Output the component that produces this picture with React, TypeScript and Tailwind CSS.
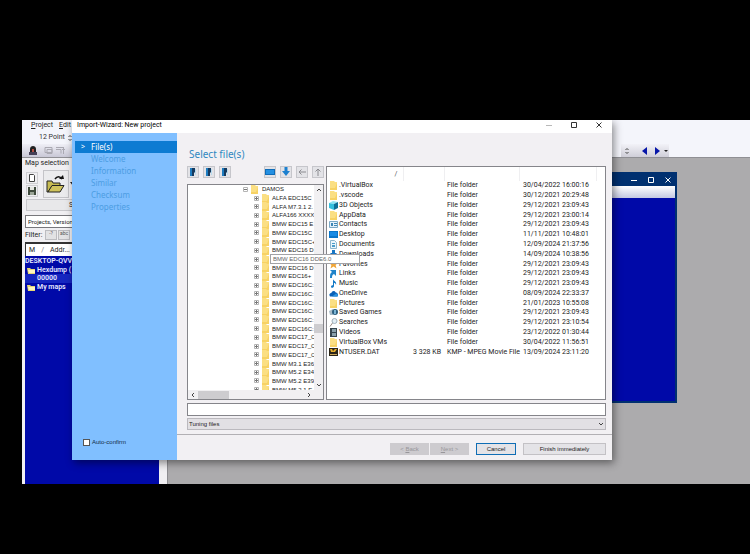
import { useState } from 'react';
import type { ReactNode } from 'react';
import { clsx } from 'clsx';

const STEPS = ['File(s)', 'Welcome', 'Information', 'Similar', 'Checksum', 'Properties'];

// the empty entry is the hovered row, its full name is shown in the tooltip
const TREE = [
  'ALFA EDC15C', 'ALFA M7.3.1 2.', 'ALFA166 XXXX', 'BMW EDC15 E', 'BMW EDC15C', 'BMW EDC15C+',
  'BMW EDC16 D', '', 'BMW EDC16 D', 'BMW EDC16+', 'BMW EDC16C:', 'BMW EDC16C:',
  'BMW EDC16C:', 'BMW EDC16C:', 'BMW EDC16C:', 'BMW EDC16C:', 'BMW EDC17_C', 'BMW EDC17_C',
  'BMW EDC17_C', 'BMW M3.1 E36', 'BMW M5.2 E34', 'BMW M5.2 E39', 'BMW M5.2.1 E',
];

interface FileRow {
  name: string;
  icon: string;
  date: string;
  size?: string;
  type?: string;
}

const FILES: FileRow[] = [
  { name: '.VirtualBox', icon: 'folder', date: '30/04/2022 16:00:16' },
  { name: '.vscode', icon: 'folder', date: '30/12/2021 20:29:48' },
  { name: '3D Objects', icon: 'cube', date: '29/12/2021 23:09:43' },
  { name: 'AppData', icon: 'folder', date: '29/12/2021 23:00:14' },
  { name: 'Contacts', icon: 'contacts', date: '29/12/2021 23:09:43' },
  { name: 'Desktop', icon: 'desktop', date: '11/11/2021 10:48:01' },
  { name: 'Documents', icon: 'document', date: '12/09/2024 21:37:56' },
  { name: 'Downloads', icon: 'download', date: '14/09/2024 10:38:56' },
  { name: 'Favorites', icon: 'star', date: '29/12/2021 23:09:43' },
  { name: 'Links', icon: 'link', date: '29/12/2021 23:09:43' },
  { name: 'Music', icon: 'music', date: '29/12/2021 23:09:43' },
  { name: 'OneDrive', icon: 'cloud', date: '08/09/2024 22:33:37' },
  { name: 'Pictures', icon: 'folder', date: '21/01/2023 10:55:08' },
  { name: 'Saved Games', icon: 'games', date: '29/12/2021 23:09:43' },
  { name: 'Searches', icon: 'search', date: '29/12/2021 23:10:54' },
  { name: 'Videos', icon: 'video', date: '23/12/2022 01:30:44' },
  { name: 'VirtualBox VMs', icon: 'folder', date: '30/04/2022 11:56:51' },
  { name: 'NTUSER.DAT', icon: 'kmp', date: '13/09/2024 23:11:20', size: '3 328 KB', type: 'KMP - MPEG Movie File' },
];

const GLYPHS: Record<string, ReactNode> = {
  folder: (
    <>
      <path d="M1 0h4l1 1h2v8H1z" fill="#fbdf83" />
      <path d="M1 7h5l2-5v7H1z" fill="#f7d264" />
    </>
  ),
  cube: (
    <>
      <path d="M0 2l4-2 5 1-4 2z" fill="#8fe3f2" />
      <path d="M0 2l5 1v6L0 7z" fill="#35bfdd" />
      <path d="M5 3l4-2v6L5 9z" fill="#0e6f97" />
    </>
  ),
  contacts: (
    <>
      <path d="M.5 1.5h8v6h-8z" fill="#e4f1fa" stroke="#7ba9c6" />
      <path d="M2 3h2v3H2zM5 3h3v1H5zM5 5h3v1H5z" fill="#3c86b5" />
    </>
  ),
  desktop: (
    <>
      <path d="M0 1h9v7H0z" fill="#0b76c9" />
      <path d="M1 2h7v4H1z" fill="#1b8be3" />
    </>
  ),
  document: (
    <>
      <path d="M1.5.5h4l2 2v6h-6z" fill="#eaf5fb" stroke="#8eb6cd" />
      <path d="M3 3h3v1H3zM3 5h3v2H3z" fill="#4b9cc9" />
    </>
  ),
  download: (
    <>
      <path d="M3 0h3v3h2L4.500 7 1 3h2z" fill="#1976c4" />
      <path d="M1 7h7v1H1z" fill="#3d566b" />
    </>
  ),
  star: <path d="M4.500 0l1.400 3H9L6.600 5l.9 3.500-3-2-3 2 .9-3.500L0 3h3.100z" fill="#f0a638" />,
  link: <path d="M1 1h6v6L5 5C3 6 3 7 3 9H1c0-3 0-5 2-6z" fill="#2184c9" />,
  music: <path d="M4 0c0 2 4 2 3 6-.3-1.500-1-2-2-2v3c0 2-3 2.500-3 .8C2 6.500 3 6 4 6.200z" fill="#1479c6" />,
  cloud: (
    <>
      <path d="M1 7.500C-.7 5 1.500 4 2.300 4 3 1.500 6 1.300 6.800 3.600 9.500 3.700 9.500 7.500 8 7.500z" fill="#0a62b8" />
      <path d="M3 7.500L7 4.500C9 4.500 9.500 7.500 8 7.500z" fill="#2a93df" />
    </>
  ),
  games: (
    <>
      <path d="M0 3l4-2v6L1 7z" fill="#a9bdc9" />
      <circle cx="6" cy="4" r="3" fill="#2c5f80" />
      <path d="M5 2h2v4H5z" fill="#79b4d5" />
    </>
  ),
  search: (
    <>
      <circle cx="5.500" cy="3" r="2.500" fill="#e3eef5" stroke="#a0b0bb" />
      <path d="M3.500 5L1 8.500" stroke="#9a8d86" />
    </>
  ),
  video: (
    <>
      <path d="M1 0h7v9H1z" fill="#36454e" />
      <path d="M3 1h4v3H3zM3 5h4v3H3z" fill="#8aa1ac" />
    </>
  ),
  kmp: (
    <>
      <path d="M0 0h9v8H0z" fill="#2b2417" />
      <path d="M1 1h2l1 2 2-2h2L6 4H2z" fill="#e7ae2b" />
      <path d="M1 6h7v1H1z" fill="#c9a65a" />
    </>
  ),
};

const Glyph = ({ name }: { name: string }) => (
  <svg viewBox="0 0 9 9" className="h-[9px] w-[9px] shrink-0" fill="none" aria-hidden="true">
    {GLYPHS[name]}
  </svg>
);

const Expander = ({ open }: { open?: boolean }) => (
  <svg viewBox="0 0 5 5" className="h-[5px] w-[5px] shrink-0" aria-hidden="true">
    <path d="M.5.5h4v4h-4z" fill="#fff" stroke="#b5b5b5" />
    <path d={open ? 'M1 2h3v1H1z' : 'M1 2h3v1H1zM2 1h1v3H2z'} fill="#777" />
  </svg>
);

const ToolButton = ({ label, children }: { label: string; children: ReactNode }) => (
  <button aria-label={label} className="flex h-3 w-3 items-center justify-center border border-[#c6c6cb] bg-[#e3e3e7]">
    <svg viewBox="0 0 10 10" className="h-[10px] w-[10px]" fill="none" aria-hidden="true">
      {children}
    </svg>
  </button>
);

const ViewGlyph = () => (
  <>
    <path d="M2 1h2v8H2z" fill="#1d7cc0" />
    <path d="M4 1h3v4L6 6v3H4z" fill="#163a5e" />
    <path d="M7 2h1v6H7z" fill="#b9dcf0" />
  </>
);

const Arrow = ({ d }: { d: string }) => (
  <svg viewBox="0 0 6 6" className="h-[6px] w-[6px] shrink-0" fill="none" stroke="#444" aria-hidden="true">
    <path d={d} />
  </svg>
);

const WindowButtons = ({ light }: { light?: boolean }) => (
  <div className={clsx('flex items-center', light ? 'gap-[9px] text-white' : 'gap-[17px] text-[#333]')}>
    {[
      { label: 'Minimize', d: 'M1 4.500h6' },
      { label: 'Maximize', d: 'M1.500 1.500h5v5h-5z' },
      { label: 'Close', d: 'M1.500 1.500l5 5M6.500 1.500l-5 5' },
    ].map(({ label, d }) => (
      <button key={label} aria-label={label} className="h-2 w-2">
        <svg viewBox="0 0 8 8" className="h-2 w-2" fill="none" stroke="currentColor">
          <path d={d} opacity={label === 'Minimize' && !light ? 0.35 : 1} />
        </svg>
      </button>
    ))}
  </div>
);

const MapPanel = () => (
  <aside className="flex w-[146px] flex-1 flex-col border-r border-[#8c8c90] bg-[#f0eff2] pr-2 pl-[3px] text-[7px]">
    <h2 className="h-[11px] leading-[11px]">Map selection</h2>
    <div className="flex h-[30px] items-center gap-[5px]">
      <div className="flex flex-col gap-[1px] pl-[1px]">
        <button aria-label="New" className="flex h-3 w-3 items-center justify-center border border-[#cfcfd2]">
          <svg viewBox="0 0 8 8" className="h-2 w-2"><path d="M1.500.5h4l1 1v6h-5z" fill="#fff" stroke="#444" /></svg>
        </button>
        <button aria-label="Save" className="flex h-3 w-3 items-center justify-center border border-[#cfcfd2]">
          <svg viewBox="0 0 8 8" className="h-2 w-2">
            <path d="M0 0h8v8H0z" fill="#3f4a3c" />
            <path d="M2 0h4v3H2z" fill="#e4e6e0" />
            <path d="M2 5h4v3H2z" fill="#9ba597" />
          </svg>
        </button>
      </div>
      <button aria-label="Open" className="flex h-7 w-[26px] items-center justify-center border border-[#c4c4c8] bg-[#ebebed]">
        <svg viewBox="0 0 20 18" className="h-[18px] w-5">
          <path d="M1 6h5l1 2h7v3H6l-4 6H1z" fill="#c6bb52" stroke="#222" />
          <path d="M6 10.500h12L14 17H2z" fill="#cfc35c" stroke="#222" />
          <path d="M9 4c2-3 5-3 7 0" fill="none" stroke="#111" strokeWidth="1.500" />
          <path d="M13 4h5l-1-4z" fill="#111" />
        </svg>
      </button>
      <svg viewBox="0 0 6 6" className="-ml-1 h-[6px] w-[6px]" aria-hidden="true"><path d="M0 1h6L3 5z" fill="#222" /></svg>
    </div>
    <button className="ml-[1px] h-3 border border-[#c8c8cc] bg-[#e8e8ea] pl-[42px] text-left leading-[10px]">S</button>
    <select aria-label="Maps shown" className="mt-1 h-[13px] w-full appearance-none border border-[#77777b] bg-white pl-[2px] text-[6px]">
      <option>Projects, Version</option>
    </select>
    <div className="flex h-[14px] items-center gap-[1px]">
      <span className="w-[19px]">Filter:</span>
      {['-?', 'abc'].map((label) => (
        <button key={label} className="flex h-[10px] w-3 items-start justify-center border border-[#bcbcc0] bg-[#e2e2e4] text-[5px] leading-[5px] text-[#555]">
          {label}
        </button>
      ))}
    </div>
    <div className="flex h-[14px] items-center gap-[6px] border-t-2 border-l border-[#333] bg-white pl-[3px]">
      <span>M</span>
      <span className="text-[#777]">/</span>
      <span>Addr...</span>
    </div>
    <ul className="flex-1 bg-[#0009a8] pt-[1px] text-[7px] leading-[9px] font-semibold whitespace-nowrap text-[#e6e8ff]">
      <li className="h-[9px]">DESKTOP-QVV</li>
      <li className="flex h-[8px] items-center gap-[2px] pl-[2px]"><MapFolder />Hexdump (</li>
      <li className="h-[9px] bg-[#1526c0] pl-3">00000</li>
      <li className="flex h-[9px] items-center gap-[2px] pl-[2px]"><MapFolder />My maps</li>
    </ul>
  </aside>
);

const MapFolder = () => (
  <svg viewBox="0 0 8 7" className="h-[7px] w-2 shrink-0" aria-hidden="true">
    <path d="M0 1h3l1 1h4v5H1z" fill="#e6d774" />
    <path d="M1 3h7v3H2z" fill="#fff8bd" />
  </svg>
);

const MainToolbars = () => (
  <header className="h-[38px] border-b border-[#8f8f94] bg-[#f4f5fb] text-[7px]">
    <nav className="flex h-[11px] items-center gap-[6px] pl-[9px]">
      <a href="#project"><u>P</u>roject</a>
      <a href="#edit"><u>E</u>dit</a>
    </nav>
    <div className="flex h-[13px] items-center gap-[2px] pl-[17px] text-[#333]">
      <span>12 Point</span>
      <Arrow d="M1.500 2l1.500-1.500L4.500 2M1.500 4l1.500 1.500L4.500 4" />
    </div>
    <div className="flex h-[13px] items-center justify-between">
      <div className="flex h-[13px] w-[120px] items-center gap-[6px] bg-gradient-to-b from-[#efeff6] to-[#c9c8d6] pl-[6px]">
        <svg viewBox="0 0 10 10" className="h-[10px] w-[10px]" aria-hidden="true">
          <path d="M2 3c0-4 6-4 6 0v3H2z" fill="#222" />
          <path d="M1 6h8v3H1z" fill="#454056" />
          <path d="M4 3h2v3H4z" fill="#b44d42" />
        </svg>
        <svg viewBox="0 0 22 9" className="h-[9px] w-[22px]" fill="none" stroke="#aaa9b2" aria-hidden="true">
          <path d="M1 1.500h7v5H1zM3 3.500h5v4H3zM12 1.500h8M12 3.500h5v4M18 3.500h3M19.500 1v7" />
        </svg>
      </div>
      <div className="mr-[81px] flex h-[13px] w-12 items-center gap-[7px] bg-gradient-to-b from-[#f2f2f8] to-[#cfced8] pl-[3px]">
        <Arrow d="M1.500 2l1.500-1.500L4.500 2M1.500 4l1.500 1.500L4.500 4" />
        <svg viewBox="0 0 28 8" className="ml-[5px] h-2 w-7 shrink-0" aria-hidden="true">
          <path d="M5 0v8L0 4z" fill="#0615a8" />
          <path d="M13 0v8l5-4z" fill="#0615a8" />
          <path d="M22 3h4l-2 2z" fill="#222" />
        </svg>
      </div>
    </div>
  </header>
);

const FileTree = () => (
  <div className="flex flex-1 flex-col border border-[#85858a] bg-white">
    <div className="flex min-h-0 flex-1">
      <div className="h-[205px] flex-1 overflow-hidden">
        <ul className="grid h-[209px] auto-rows-fr font-['Liberation_Sans',sans-serif] text-[6px] leading-none whitespace-nowrap">
          <li className="flex items-center gap-[2px] pl-[55px]"><Expander open /><Glyph name="folder" /><span className="pl-[1px]">DAMOS</span></li>
          {TREE.map((name, i) => (
            <li key={i} className="flex items-center gap-[2px] pl-[66px]">
              <Expander />
              <Glyph name="folder" />
              <span>{name}</span>
            </li>
          ))}
        </ul>
      </div>
      <div className="flex w-[9px] flex-col items-center bg-[#f1f0f2] py-[2px]">
        <Arrow d="M1 4l2-2 2 2" />
        <div className="mt-[131px] h-[9px] w-full bg-[#cdcccf]" />
        <div className="flex-1" />
        <Arrow d="M1 2l2 2 2-2" />
      </div>
    </div>
    <div className="flex h-[9px] items-center gap-[2px] bg-[#f1f0f2] px-[2px]">
      <Arrow d="M4 1L2 3l2 2" />
      <div className="h-2 w-[31px] bg-[#cdcccf]" />
      <div className="flex-1" />
      <Arrow d="M2 1l2 2-2 2" />
      <div className="w-[7px]" />
    </div>
  </div>
);

const FileList = () => (
  <div className="flex-1 border border-[#85858a] bg-white">
    <table className="w-full table-fixed border-collapse font-['Roboto',sans-serif] text-[7px] leading-none whitespace-nowrap text-[#222]">
      <colgroup>
        <col className="w-[76px]" />
        <col className="w-[41px]" />
        <col className="w-[75px]" />
        <col className="w-[77px]" />
        <col />
      </colgroup>
      <thead>
        <tr className="h-[14px]">
          <th aria-label="Name" className="border-r border-[#efeff1] p-0 pr-[5px] text-right font-normal text-[#555]">/</th>
          <th aria-label="Size" className="border-r border-[#efeff1] p-0" />
          <th aria-label="Type" className="border-r border-[#efeff1] p-0" />
          <th aria-label="Modified" className="border-r border-[#efeff1] p-0" />
          <td />
        </tr>
      </thead>
    </table>
    <table className="h-[176px] w-full table-fixed font-['Roboto',sans-serif] text-[7px] leading-none whitespace-nowrap text-[#222]">
      <tbody>
        {FILES.map((file) => (
          <tr key={file.name}>
            <td className="w-[76px] p-0">
              <span className="flex items-center gap-[1px] pl-[2px]"><Glyph name={file.icon} />{file.name}</span>
            </td>
            <td className="w-[41px] p-0 pr-[3px] text-right">{file.size}</td>
            <td className="w-[75px] p-0 pl-[3px]">{file.type ?? 'File folder'}</td>
            <td className="p-0 pl-1">{file.date}</td>
          </tr>
        ))}
      </tbody>
    </table>
  </div>
);

const ImportWizard = () => {
  const [step, setStep] = useState('File(s)');
  const [path, setPath] = useState('');

  return (
    <section className="absolute top-0 right-[138px] bottom-6 left-[50px] flex flex-col bg-[#f2f0f3] shadow-[2px_3px_8px_rgba(0,0,0,0.45)]">
      <div className="flex h-[13px] items-center justify-between bg-white pt-[1px] pr-[9px] pb-[5px] pl-[5px]">
        <h1 className="text-[7px] leading-[8px] text-black">Import-Wizard: New project</h1>
        <WindowButtons />
      </div>
      <div className="flex flex-1">
        <div className="flex w-[105px] flex-col justify-between bg-[#80bfff] pt-2 pb-[13px]">
          <nav className="flex flex-col font-['Noto_Sans',sans-serif] text-[8px] leading-[12px]">
            {STEPS.map((name) => (
              <button
                key={name}
                onClick={() => setStep(name)}
                className={clsx(
                  'ml-[3px] flex h-3 text-left',
                  name === step ? 'bg-[#0d7bd2] text-white' : 'text-[#4c9de3]'
                )}
              >
                <span className="w-4 pl-[6px] text-[7px]">{name === step ? '>' : ''}</span>
                {name}
              </button>
            ))}
          </nav>
          <label className="flex items-center gap-[2px] pl-[11px] font-['Liberation_Sans',sans-serif] text-[6px] leading-[10px] text-[#102a44]">
            <input type="checkbox" className="h-[7px] w-[7px] appearance-none border border-[#555] bg-white checked:bg-[#0d7bd2]" />
            Auto-confirm
          </label>
        </div>

        <div className="flex flex-1 flex-col">
          <div className="flex flex-1 flex-col border-b border-[#b2b0b4] pr-[6px] pb-1 pl-[10px]">
            <h2 className="h-[33px] pt-[13px] pl-[2px] font-['Noto_Sans',sans-serif] text-[10px] leading-[16px] text-[#2f88c0]">Select file(s)</h2>
            <div className="relative flex flex-1 gap-[2px]">
              <div className="flex w-[137px] flex-col gap-[6px]">
                <div className="flex gap-1">
                  <ToolButton label="List view"><ViewGlyph /></ToolButton>
                  <ToolButton label="Tree view"><ViewGlyph /></ToolButton>
                  <ToolButton label="Detail view"><ViewGlyph /></ToolButton>
                  <div className="flex-1" />
                  <ToolButton label="Desktop">
                    <path d="M0 2h10v6H0z" fill="#0f6cb8" />
                    <path d="M1 3h8v4H1z" fill="#2490e2" />
                  </ToolButton>
                  <ToolButton label="Downloads"><path d="M3.500 0h3v4H9L5 9 1 4h2.500z" fill="#1c80cf" /></ToolButton>
                  <ToolButton label="Back"><path d="M9 5H2M4.500 2.500L2 5l2.500 2.500" stroke="#8b8b90" /></ToolButton>
                  <ToolButton label="Up"><path d="M5 9V2M2.500 4.500L5 2l2.500 2.500" stroke="#8b8b90" /></ToolButton>
                </div>
                <FileTree />
              </div>
              <FileList />
              <div role="tooltip" className="absolute top-[88px] left-[83px] h-[10px] w-[90px] border border-[#a2a2a6] bg-white pl-[2px] font-['Liberation_Sans',sans-serif] text-[6px] leading-[8px] text-[#666]">
                BMW EDC16 DDE6.0
              </div>
            </div>
            <input
              aria-label="File name"
              value={path}
              onChange={(e) => setPath(e.target.value)}
              className="mt-[3px] h-[13px] w-full border border-[#85858a] bg-white px-[2px] text-[7px] outline-none"
            />
            <div className="relative mt-[2px]">
              <select aria-label="File type" className="block h-3 w-full appearance-none border border-[#bbb9be] bg-[#e2e0e4] pl-[1px] font-['Liberation_Sans',sans-serif] text-[6px] leading-[10px] text-[#222]">
                <option>Tuning files</option>
              </select>
              <div className="pointer-events-none absolute top-[3px] right-[2px]"><Arrow d="M1 2l2 2 2-2" /></div>
            </div>
          </div>
          <footer className="flex h-[25px] items-start justify-end pt-2 pr-[6px] font-['Liberation_Sans',sans-serif] text-[6px] leading-[10px]">
            <button disabled className="mr-[1px] h-3 w-[39px] bg-[#cdcbcf] text-[#98969a]">&lt; <u>B</u>ack</button>
            <button disabled className="mr-[7px] h-3 w-[39px] bg-[#cdcbcf] text-[#98969a]"><u>N</u>ext &gt;</button>
            <button className="mr-[7px] h-3 w-10 border border-[#0f6db5] bg-[#e4e3e7]">Cancel</button>
            <button className="h-3 w-[83px] border border-[#c3c1c5] bg-[#e4e3e7]">Finish immediately</button>
          </footer>
        </div>
      </div>
    </section>
  );
};

export default function App() {
  return (
    <div className="flex min-h-screen flex-col bg-black pt-[120px] pb-[70px] pl-[22px] font-['Roboto',sans-serif] text-[#222]">
      <main className="relative flex flex-1 flex-col overflow-hidden bg-[#acabad]">
        <MainToolbars />
        <MapPanel />
        <section className="absolute top-[52px] right-[73px] bottom-[81px] left-[300px] flex flex-col border-2 border-[#003070] bg-[#0009a8]">
          <div className="flex h-3 items-center justify-end bg-[#003070] pr-[3px]">
            <WindowButtons light />
          </div>
          <div className="h-3 bg-gradient-to-b from-white to-[#c3c8e2]" />
        </section>
        <ImportWizard />
      </main>
    </div>
  );
}
